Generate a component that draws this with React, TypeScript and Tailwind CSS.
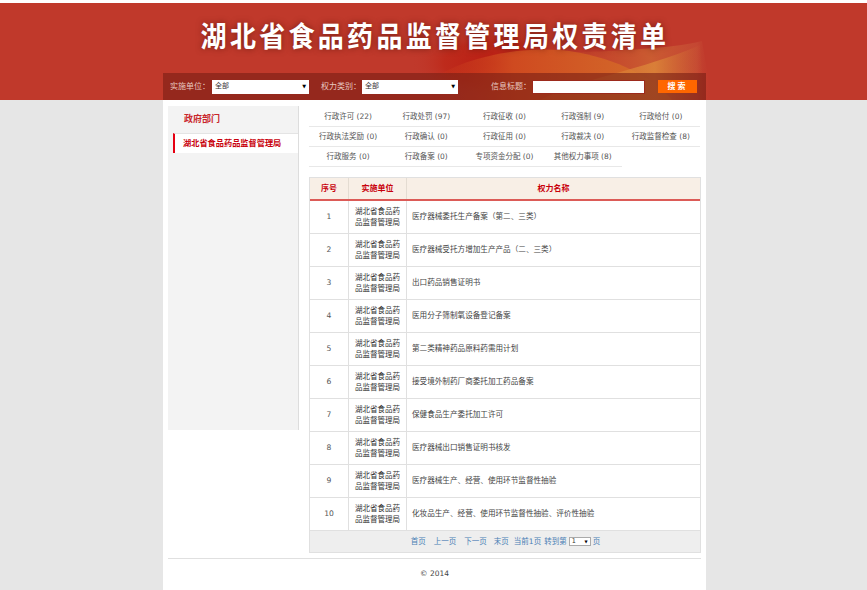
const baseFont = "font-['DejaVu_Sans','Liberation_Sans','Noto_Sans_CJK_SC',sans-serif]";

const tabs = [
  ["行政许可 (22)", "行政处罚 (97)", "行政征收 (0)", "行政强制 (9)", "行政给付 (0)"],
  ["行政执法奖励 (0)", "行政确认 (0)", "行政征用 (0)", "行政裁决 (0)", "行政监督检查 (8)"],
  ["行政服务 (0)", "行政备案 (0)", "专项资金分配 (0)", "其他权力事项 (8)"],
];

const rows = [
  "医疗器械委托生产备案（第二、三类）",
  "医疗器械受托方增加生产产品（二、三类）",
  "出口药品销售证明书",
  "医用分子筛制氧设备登记备案",
  "第二类精神药品原料药需用计划",
  "接受境外制药厂商委托加工药品备案",
  "保健食品生产委托加工许可",
  "医疗器械出口销售证明书核发",
  "医疗器械生产、经营、使用环节监督性抽验",
  "化妆品生产、经营、使用环节监督性抽验、评价性抽验",
];

function FakeSelect({ width, label }: { width: string; label: string }) {
  return (
    <div className={`flex h-[14px] items-center justify-between bg-white pl-[3px] pr-[3px] text-[7px] text-[#333] ${width}`}>
      <span>{label}</span>
      <span className="text-[5px] text-black">▼</span>
    </div>
  );
}

function Banner() {
  return (
    <div className="relative h-[97px] overflow-hidden bg-[#c0392b]">
      {/* orange swoosh behind the search bar */}
      <svg className="absolute left-0 top-0" width="867" height="97" viewBox="0 0 867 97">
        <defs>
          <radialGradient id="red" cx="0.5" cy="0.5" r="0.5">
            <stop offset="0" stopColor="#b91c12" />
            <stop offset="0.6" stopColor="#bd2617" stopOpacity="0.75" />
            <stop offset="1" stopColor="#c0392b" stopOpacity="0" />
          </radialGradient>
          <linearGradient id="band" x1="0" y1="0" x2="1" y2="0">
            <stop offset="0" stopColor="#c8381c" stopOpacity="0" />
            <stop offset="0.35" stopColor="#cf4a20" />
            <stop offset="1" stopColor="#d4702c" />
          </linearGradient>
          <linearGradient id="haze" x1="0" y1="0" x2="1" y2="0">
            <stop offset="0" stopColor="#cc5a28" stopOpacity="0" />
            <stop offset="0.6" stopColor="#cf6a34" stopOpacity="0.7" />
            <stop offset="0.9" stopColor="#c9553a" stopOpacity="0.5" />
            <stop offset="1" stopColor="#c0392b" stopOpacity="0" />
          </linearGradient>
          <linearGradient id="gold" x1="0" y1="0" x2="1" y2="0">
            <stop offset="0" stopColor="#d8752f" stopOpacity="0.3" />
            <stop offset="0.7" stopColor="#dc8539" stopOpacity="0.85" />
            <stop offset="1" stopColor="#cf6a34" stopOpacity="0" />
          </linearGradient>
        </defs>
        <path d="M560 50 C 610 48, 670 46, 702 38 L 712 97 L 560 97 Z" fill="url(#haze)" />
        <ellipse cx="495" cy="60" rx="85" ry="36" fill="url(#red)" />
        <path d="M428 78 C 465 54, 515 44, 560 47 C 610 52, 650 72, 672 97 L 428 97 Z" fill="url(#band)" />
        <path d="M540 97 C 585 74, 640 68, 700 42 L 704 97 Z" fill="url(#gold)" />
      </svg>
      <div className="relative flex h-[73px] items-start justify-center pt-[14px]">
        <h1 className="scale-y-110 whitespace-nowrap pl-[3px] font-['Noto_Sans_CJK_SC',sans-serif] text-[26px] font-bold leading-[36px] tracking-[3.3px] text-white [text-shadow:0_0_6px_rgba(90,20,10,0.7)]">
          湖北省食品药品监督管理局权责清单
        </h1>
      </div>
    </div>
  );
}

function SearchBar() {
  return (
    <div className="absolute left-[163px] top-[73px] flex h-[27px] w-[543px] items-center bg-[rgba(120,30,20,0.6)] text-[8px] text-[#e8c8c0]">
      <span className="ml-[7px] w-[42px]">实施单位：</span>
      <FakeSelect width="w-[97px]" label="全部" />
      <span className="ml-[12px] w-[41px]">权力类别：</span>
      <FakeSelect width="w-[96px]" label="全部" />
      <span className="ml-[33px] w-[41px]">信息标题：</span>
      <div className="h-[14px] w-[113px] border border-[#9c2a1c] bg-white" />
      <button className="ml-[13px] h-[13px] w-[39px] bg-[#ff6600] text-[8px] font-bold tracking-[2px] text-white">搜索</button>
    </div>
  );
}

function Sidebar() {
  return (
    <aside className="h-[324px] w-[131px] shrink-0 border-r border-[#ddd] bg-[#f3f3f3]">
      <div className="flex h-[27px] items-center pl-[16px] text-[9px] font-bold text-[#c9252b]">政府部门</div>
      <div className="ml-[5px] flex h-[20px] items-center border-l-[2px] border-t border-l-[#e60012] border-t-[#e4e4e4] bg-white pl-[8px] text-[8.2px] font-bold text-[#c8000b]">
        湖北省食品药品监督管理局
      </div>
    </aside>
  );
}

function Tabs() {
  return (
    <div className="pt-[1px] text-[7.5px] text-[#555]">
      {tabs.map((row, i) => (
        <div key={i} className="flex h-[20px] w-fit border-b border-[#e8e8e8]">
          {row.map((t) => (
            <div key={t} className="flex h-full w-[78.2px] items-center justify-center whitespace-nowrap">{t}</div>
          ))}
        </div>
      ))}
    </div>
  );
}

function DataTable() {
  return (
    <div className="mt-[10px] border border-[#e0e0e0] text-[7.6px] text-[#444]">
      <div className="flex h-[23px] border-b-[2px] border-[#dc5b57] bg-[#f8efe6] text-[8px] font-bold text-[#c8000b]">
        <div className="flex w-[39px] items-center justify-center border-r border-[#e4dcd2]">序号</div>
        <div className="flex w-[58px] items-center justify-center border-r border-[#e4dcd2]">实施单位</div>
        <div className="flex flex-1 items-center justify-center">权力名称</div>
      </div>
      {rows.map((name, i) => (
        <div key={name} className="flex h-[33px] border-b border-[#e0e0e0]">
          <div className="flex w-[39px] items-center justify-center border-r border-[#e0e0e0] text-[#555]">{i + 1}</div>
          <div className="flex w-[58px] items-center justify-center border-r border-[#e0e0e0] text-center text-[7.5px] leading-[11.5px] text-[#333]">
            <span>湖北省食品药<br />品监督管理局</span>
          </div>
          <div className="flex flex-1 items-center pl-[5px]">{name}</div>
        </div>
      ))}
      <div className="flex h-[21px] items-center justify-center bg-[#eee] pl-[1px] text-[7.5px] text-[#4a7eb5]">
        <span>首页</span>
        <span className="ml-[8px]">上一页</span>
        <span className="ml-[8px]">下一页</span>
        <span className="ml-[7px]">末页</span>
        <span className="ml-[5px]">当前1页</span>
        <span className="ml-[3px]">转到第</span>
        <span className="ml-[2px] flex h-[9px] w-[22px] items-center justify-between border border-[#aaa] bg-white px-[2px] text-[6.5px] text-[#333]">
          1<span className="text-[4px] text-black">▼</span>
        </span>
        <span className="ml-[2px]">页</span>
      </div>
    </div>
  );
}

export default function App() {
  return (
    <div className={`relative h-[590px] w-[867px] overflow-hidden bg-[#e6e6e6] pt-[3px] ${baseFont}`}>
      <div className="absolute left-0 top-0 h-[3px] w-full bg-white" />
      <Banner />
      <SearchBar />
      <div className="ml-[163px] h-[490px] w-[543px] bg-white px-[5px] pt-[6px]">
        <div className="flex gap-[10px]">
          <Sidebar />
          <main className="w-[392px]">
            <Tabs />
            <DataTable />
          </main>
        </div>
        <div className="mt-[5px] border-t border-[#e0e0e0] pt-[9px] text-center text-[7.5px] leading-[12px] text-[#444]">
          © 2014
        </div>
      </div>
    </div>
  );
}
